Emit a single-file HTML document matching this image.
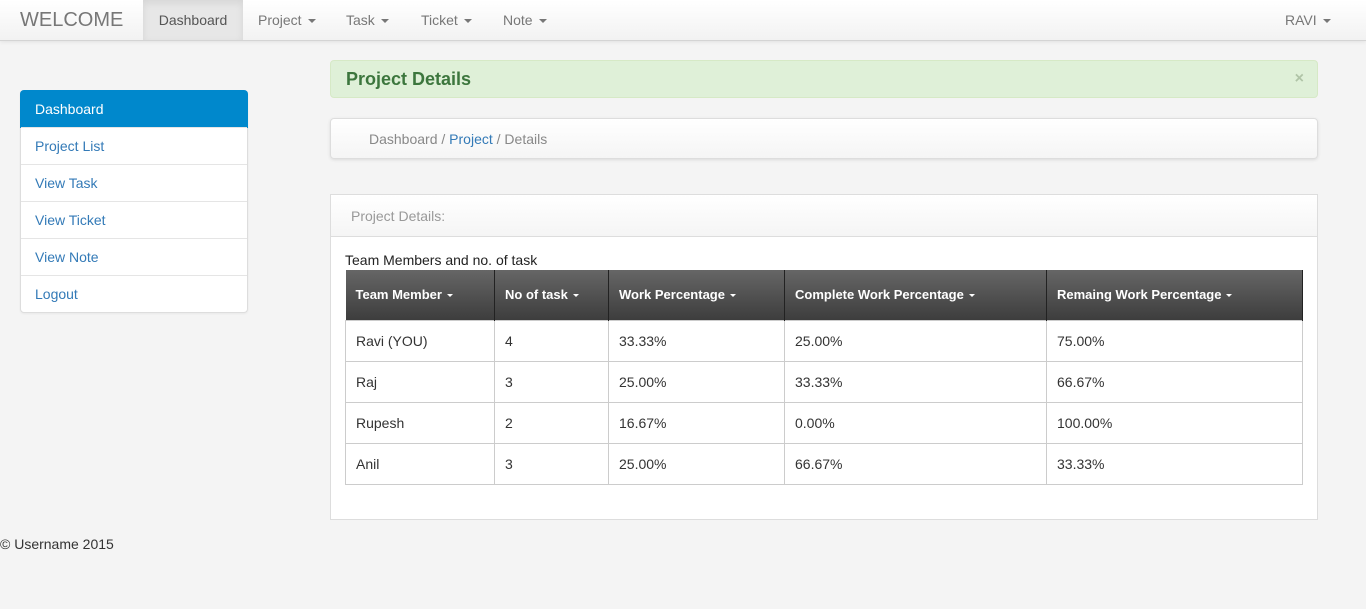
<!DOCTYPE html>
<html><head><style>
*{box-sizing:border-box;margin:0;padding:0}
body{width:1366px;height:609px;background:#f4f4f4;font-family:"Liberation Sans",sans-serif;font-size:14px;color:#333;position:relative;overflow:hidden}
.nav{position:absolute;left:0;top:0;width:1366px;height:41px;background:linear-gradient(#fff,#f2f2f2);border-bottom:1px solid #d4d4d4;box-shadow:0 1px 4px rgba(0,0,0,.08)}
.brand{position:absolute;left:20px;top:9px;font-size:20px;color:#777}
.ni{position:absolute;top:0;height:40px;line-height:40px;color:#777;font-size:14px}
.car{display:inline-block;width:0;height:0;border-left:4px solid transparent;border-right:4px solid transparent;border-top:4px solid #777;vertical-align:middle;margin-left:6px}
.side{position:absolute;left:20px;top:90px;width:228px;background:#fff;border:1px solid #ddd;border-radius:4px;box-shadow:0 1px 2px rgba(0,0,0,.05)}
.side div{height:37px;line-height:37px;padding-left:14px;color:#337ab7;border-top:1px solid #e5e5e5}
.side div.a{background:#0088cc;color:#fff;border:none;border-radius:4px 4px 0 0;margin:-1px;padding-left:15px;height:38px;line-height:38px}
.alert{position:absolute;left:330px;top:60px;width:988px;height:38px;background:#dff0d8;border:1px solid #d6e9c6;border-radius:4px;color:#3c763d;font-weight:bold;font-size:18px;line-height:36px;padding-left:15px}
.x{position:absolute;right:13px;top:0;color:#b0c4a7;font-size:16px}
.bc{position:absolute;left:330px;top:118px;width:988px;height:41px;background:linear-gradient(#fff,#f5f5f5);border:1px solid #ddd;border-radius:4px;line-height:40px;padding-left:38px;color:#888;box-shadow:0 1px 3px rgba(0,0,0,.1)}
.bc a{color:#337ab7}
.panel{position:absolute;left:330px;top:194px;width:988px;height:326px;background:#fff;border:1px solid #ddd}
.ph{height:42px;background:linear-gradient(#fff,#f5f5f5);border-bottom:1px solid #ddd;line-height:42px;padding-left:20px;color:#999}
.cap{position:absolute;left:14px;top:57px;font-size:14px;color:#222}
table{position:absolute;left:14px;top:75px;border-collapse:collapse;width:958px}
th{height:50px;background:linear-gradient(#666,#3d3d3d);color:#fff;font-size:13px;text-align:left;padding-left:10px;border-right:1px solid #222}
td{height:41px;border:1px solid #ccc;padding-left:10px;font-size:14px}
th .car{border-top-color:#fff;border-width:3px 3px 0;margin-left:5px}
.foot{position:absolute;left:0;top:536px;font-size:14px}
</style></head><body>
<div class="nav">
<div class="brand">WELCOME</div>
<div class="ni" style="left:143px;width:100px;background:#e7e7e7;text-align:center;color:#555;box-shadow:inset 0 3px 8px rgba(0,0,0,.08)">Dashboard</div>
<div class="ni" style="left:258px">Project<span class="car"></span></div>
<div class="ni" style="left:346px">Task<span class="car"></span></div>
<div class="ni" style="left:421px">Ticket<span class="car"></span></div>
<div class="ni" style="left:503px">Note<span class="car"></span></div>
<div class="ni" style="left:1285px">RAVI<span class="car"></span></div>
</div>
<div class="side">
<div class="a">Dashboard</div><div>Project List</div><div>View Task</div><div>View Ticket</div><div>View Note</div><div>Logout</div>
</div>
<div class="alert">Project Details<span class="x">×</span></div>
<div class="bc">Dashboard / <a>Project</a> / Details</div>
<div class="panel">
<div class="ph">Project Details:</div>
<div class="cap">Team Members and no. of task</div>
<table>
<tr><th style="width:149px">Team Member<span class="car"></span></th><th style="width:114px">No of task<span class="car"></span></th><th style="width:176px">Work Percentage<span class="car"></span></th><th style="width:262px">Complete Work Percentage<span class="car"></span></th><th>Remaing Work Percentage<span class="car"></span></th></tr>
<tr><td>Ravi (YOU)</td><td>4</td><td>33.33%</td><td>25.00%</td><td>75.00%</td></tr>
<tr><td>Raj</td><td>3</td><td>25.00%</td><td>33.33%</td><td>66.67%</td></tr>
<tr><td>Rupesh</td><td>2</td><td>16.67%</td><td>0.00%</td><td>100.00%</td></tr>
<tr><td>Anil</td><td>3</td><td>25.00%</td><td>66.67%</td><td>33.33%</td></tr>
</table>
</div>
<div class="foot">© Username 2015</div>
</body></html>
